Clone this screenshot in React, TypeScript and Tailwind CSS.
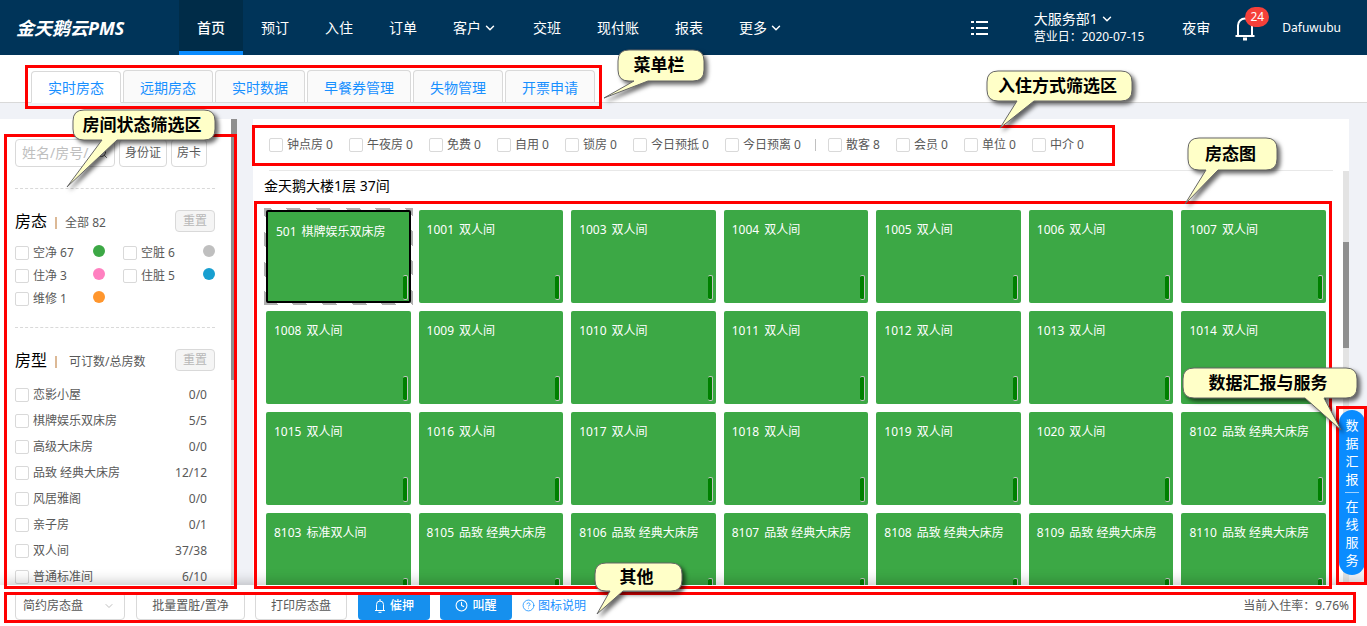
import { ChevronDown, CircleHelp, Clock, Search } from "lucide-react";

// --- DATA ---
const NAV = [
  { label: "首页", active: true },
  { label: "预订" },
  { label: "入住" },
  { label: "订单" },
  { label: "客户", more: true },
  { label: "交班" },
  { label: "现付账" },
  { label: "报表" },
  { label: "更多", more: true },
];

const TABS = ["实时房态", "远期房态", "实时数据", "早餐券管理", "失物管理", "开票申请"];

const STATUSES = [
  { label: "空净 67", dot: "bg-[#3ca845]" },
  { label: "空脏 6", dot: "bg-[#bfbfbf]" },
  { label: "住净 3", dot: "bg-[#ff80c0]" },
  { label: "住脏 5", dot: "bg-[#189fd0]" },
  { label: "维修 1", dot: "bg-[#ff962d]" },
];

const ROOM_TYPES = [
  { name: "恋影小屋", count: "0/0" },
  { name: "棋牌娱乐双床房", count: "5/5" },
  { name: "高级大床房", count: "0/0" },
  { name: "品致 经典大床房", count: "12/12" },
  { name: "风居雅阁", count: "0/0" },
  { name: "亲子房", count: "0/1" },
  { name: "双人间", count: "37/38" },
  { name: "普通标准间", count: "6/10" },
];

const STAY_FILTERS = ["钟点房 0", "午夜房 0", "免费 0", "自用 0", "锁房 0", "今日预抵 0", "今日预离 0"];
const GUEST_FILTERS = ["散客 8", "会员 0", "单位 0", "中介 0"];

const ROOMS = [
  { no: "501", type: "棋牌娱乐双床房" },
  { no: "1001", type: "双人间" },
  { no: "1003", type: "双人间" },
  { no: "1004", type: "双人间" },
  { no: "1005", type: "双人间" },
  { no: "1006", type: "双人间" },
  { no: "1007", type: "双人间" },
  { no: "1008", type: "双人间" },
  { no: "1009", type: "双人间" },
  { no: "1010", type: "双人间" },
  { no: "1011", type: "双人间" },
  { no: "1012", type: "双人间" },
  { no: "1013", type: "双人间" },
  { no: "1014", type: "双人间" },
  { no: "1015", type: "双人间" },
  { no: "1016", type: "双人间" },
  { no: "1017", type: "双人间" },
  { no: "1018", type: "双人间" },
  { no: "1019", type: "双人间" },
  { no: "1020", type: "双人间" },
  { no: "8102", type: "品致 经典大床房" },
  { no: "8103", type: "标准双人间" },
  { no: "8105", type: "品致 经典大床房" },
  { no: "8106", type: "品致 经典大床房" },
  { no: "8107", type: "品致 经典大床房" },
  { no: "8108", type: "品致 经典大床房" },
  { no: "8109", type: "品致 经典大床房" },
  { no: "8110", type: "品致 经典大床房" },
];

export default function App() {
  return (
    <div className="relative flex h-screen flex-col overflow-hidden bg-[#f0f2f7] font-['Noto_Sans','Noto_Sans_CJK_SC',sans-serif] text-xs text-[#595959]">
      <Header />
      <TabStrip />
      <div className="flex min-h-0 flex-1 gap-4 pt-4 pr-[18px]">
        <Sidebar />
        <RoomBoard />
      </div>
      <Footer />
      <SideDock />
      <Guide />
    </div>
  );
}

// --- TOP BAR ---
function Header() {
  return (
    <header className="flex h-[55px] shrink-0 items-center bg-[#003459] pr-[26px] text-sm text-white">
      <h1 className="w-[179px] pl-4 text-lg font-bold italic whitespace-nowrap">金天鹅云PMS</h1>
      <nav className="flex h-full">
        {NAV.map((item) => (
          <a
            key={item.label}
            href="#"
            className={`flex items-center gap-0.5 px-[18px] whitespace-nowrap ${
              item.active ? "bg-[#002c48] font-medium shadow-[inset_0_-4px_0_#0a8cff]" : ""
            }`}
          >
            {item.label}
            {item.more && <ChevronDown size={14} strokeWidth={2.5} />}
          </a>
        ))}
      </nav>
      <div className="ml-auto flex items-center whitespace-nowrap">
        <button aria-label="列表" className="mr-[46px]">
          <svg width="17" height="14" viewBox="0 0 17 14" fill="currentColor">
            <path d="M0 0h3v2H0zM0 6h3v2H0zM0 12h3v2H0zM5 0h12v2H5zM5 6h12v2H5zM5 12h12v2H5z" />
          </svg>
        </button>
        <div className="mr-[38px] leading-[18px]">
          <button className="flex items-center gap-0.5">
            大服务部1 <ChevronDown size={14} strokeWidth={2.5} />
          </button>
          <div className="text-xs leading-[18px]">营业日：2020-07-15</div>
        </div>
        <a href="#" className="mr-[23px]">夜审</a>
        <button aria-label="通知" className="relative mr-[25px]">
          <svg width="24" height="26" viewBox="0 0 24 26" fill="none" stroke="currentColor" strokeWidth="2">
            <path d="M5 21V10.500a7 7 0 0 1 14 0V21" />
            <path d="M2.500 21h19" />
            <path d="M10 24h4" strokeWidth="3" />
          </svg>
          <span className="absolute -top-2 left-3 h-5 w-6 rounded-full bg-[#f5403a] text-center text-xs leading-5">24</span>
        </button>
        <a href="#" className="text-xs">Dafuwubu</a>
      </div>
    </header>
  );
}

function TabStrip() {
  return (
    <div className="flex h-12 shrink-0 items-end gap-0.5 border-b border-[#d9d9d9] bg-white pl-[31px]">
      {TABS.map((tab, i) => (
        <button
          key={tab}
          className={`h-8 rounded-t border border-[#d9d9d9] px-4 pt-0.5 text-sm whitespace-nowrap text-[#1890ff] ${
            i === 0 ? "-mb-px border-b-white bg-white" : "border-b-0 bg-[#fafafa]"
          }`}
        >
          {tab}
        </button>
      ))}
    </div>
  );
}

function Check({ label }: { label: string }) {
  return (
    <label className="flex items-center gap-1 whitespace-nowrap">
      <input type="checkbox" className="size-3.5 appearance-none rounded-xs border border-[#d9d9d9] bg-white" />
      {label}
    </label>
  );
}

function ResetButton() {
  return (
    <button className="ml-auto h-[22px] w-10 rounded border border-[#d9d9d9] bg-[#f5f5f5] text-[#b8b8b8]">重置</button>
  );
}

// --- LEFT FILTERS ---
function Sidebar() {
  return (
    <aside className="flex w-[237px] shrink-0 overflow-hidden bg-white">
      <div className="flex-1 pt-5 pr-4 pl-[15px]">
        <div className="flex gap-1">
          <div className="flex h-7 w-[100px] items-center rounded border border-[#d9d9d9] px-1.5">
            <input
              aria-label="姓名/房号"
              placeholder="姓名/房号/"
              className="w-full min-w-0 text-sm outline-none placeholder:text-[#bfbfbf]"
            />
            <Search size={12} className="shrink-0" />
          </div>
          <button className="h-7 w-12 rounded border border-[#d9d9d9]">身份证</button>
          <button className="h-7 w-9 rounded border border-[#d9d9d9]">房卡</button>
        </div>

        <section className="mt-[21px] w-[200px] border-t border-dashed border-[#d9d9d9] pt-[21px]">
          <div className="flex items-center">
            <h2 className="text-base leading-[22px] text-black">房态</h2>
            <span className="mx-2 mt-1 h-3 w-0.5 bg-[#dcb996]" />
            <span className="pt-1">全部 82</span>
            <ResetButton />
          </div>
          <div className="mt-[9px] grid grid-cols-[84px_92px] gap-x-6">
            {STATUSES.map((s) => (
              <div key={s.label} className="flex h-[23px] items-center justify-between">
                <Check label={s.label} />
                <span className={`-mt-1 size-3 rounded-full ${s.dot} ${s.label.includes("脏") ? "" : "-mr-1.5"}`} />
              </div>
            ))}
          </div>
        </section>

        <section className="mt-[17px] w-[200px] border-t border-dashed border-[#d9d9d9] pt-[21px]">
          <div className="flex items-center">
            <h2 className="text-base leading-[22px] text-black">房型</h2>
            <span className="mt-1 mr-3 ml-2 h-3 w-0.5 bg-[#dcb996]" />
            <span className="pt-1">可订数/总房数</span>
            <ResetButton />
          </div>
          <ul className="mt-[11px]">
            {ROOM_TYPES.map((r) => (
              <li key={r.name} className="flex h-[26px] items-center justify-between pr-2">
                <Check label={r.name} />
                <span>{r.count}</span>
              </li>
            ))}
          </ul>
        </section>
      </div>
      <div className="w-1.5 bg-[#dedede]">
        <div className="h-[261px] bg-[#8f8f8f]" />
      </div>
    </aside>
  );
}

// --- ROOM GRID ---
function RoomBoard() {
  return (
    <main className="flex min-w-0 flex-1 flex-col overflow-hidden bg-white">
      <div className="mr-4 ml-4 flex h-[52px] shrink-0 items-center gap-4 border-b border-[#e8e8e8]">
        {STAY_FILTERS.map((f) => (
          <Check key={f} label={f} />
        ))}
        <div className="-ml-0.5 flex items-center gap-3">
          <span className="h-3 w-px bg-[#c0c0c0]" />
          <Check label={GUEST_FILTERS[0]} />
        </div>
        {GUEST_FILTERS.slice(1).map((f) => (
          <Check key={f} label={f} />
        ))}
      </div>
      <div className="flex min-h-0 flex-1">
        <div className="flex-1 overflow-hidden pr-[17px] pl-[13px]">
          <h2 className="-ml-0.5 pt-1 text-sm leading-[22px] text-black">金天鹅大楼1层 37间</h2>
          <div className="mt-[13px] grid grid-cols-7 gap-2">
            {ROOMS.map((room, i) => (
              <RoomTile key={room.no} no={room.no} type={room.type} selected={i === 0} />
            ))}
          </div>
        </div>
        <div className="w-1.5 bg-[#e3e3e3] pt-[71px]">
          <div className="h-[106px] bg-[#8f8f8f]" />
        </div>
      </div>
    </main>
  );
}

function RoomTile({ no, type, selected }: { no: string; type: string; selected: boolean }) {
  return (
    <div className="relative h-[93px]">
      {selected && (
        <div className="absolute -inset-0.5 bg-[repeating-linear-gradient(45deg,#b0b0b0_0_10px,#fff_10px_21px)]" />
      )}
      <button
        className={`relative flex size-full items-start gap-[5px] overflow-hidden rounded-xs bg-[#3ca845] px-2 pt-2.5 leading-5 whitespace-nowrap text-white ${
          selected ? "border-2 border-black" : ""
        }`}
      >
        <span>{no}</span>
        <span>{type}</span>
        <span
          className={`absolute h-[25px] w-[5px] rounded-xs border border-l-0 border-[#c4c4c4] bg-[#008000] ${
            selected ? "right-px bottom-px" : "right-[3px] bottom-[3px]"
          }`}
        />
      </button>
    </div>
  );
}

// --- BOTTOM BAR ---
function Footer() {
  return (
    <footer className="relative flex h-[41px] shrink-0 items-center bg-white pr-[18px] pb-1.5 pl-[15px] pt-1.5 whitespace-nowrap shadow-[0_-2px_14px_rgba(0,0,0,0.25)]">
      <div className="relative">
        <select aria-label="房态盘" className="h-7 w-[110px] appearance-none rounded border border-[#d9d9d9] bg-white px-[7px]">
          <option>简约房态盘</option>
        </select>
        <ChevronDown size={12} className="absolute top-2 right-2.5 text-[#bfbfbf]" />
      </div>
      <button className="ml-[11px] h-7 w-[109px] rounded border border-[#d9d9d9]">批量置脏/置净</button>
      <button className="ml-2.5 h-7 w-[92px] rounded border border-[#d9d9d9]">打印房态盘</button>
      <button className="ml-[11px] flex h-7 w-[72px] items-center justify-center gap-1 rounded bg-[#1690ee] font-medium text-white">
        <svg width="12" height="14" viewBox="0 0 12 14" fill="none" stroke="currentColor">
          <path d="M2.500 11V5.500a3.500 3.500 0 0 1 7 0V11M1 11.500h10M6 0v2M4.500 13.300h3" />
        </svg>
        催押
      </button>
      <button className="ml-2.5 flex h-7 w-[72px] items-center justify-center gap-1 rounded bg-[#1690ee] font-medium text-white">
        <Clock size={13} /> 叫醒
      </button>
      <a href="#" className="ml-2.5 flex items-center gap-[3px] text-[#1890ff]">
        <CircleHelp size={13} strokeWidth={1.5} /> 图标说明
      </a>
      <span className="ml-auto">当前入住率：9.76%</span>
    </footer>
  );
}

function SideDock() {
  return (
    <div className="absolute top-[410px] right-0.5 flex w-[26px] flex-col items-center rounded-full bg-[#0a8cff] py-1.5 text-[13px] leading-[18px] text-white">
      <button className="w-[13px]">数据汇报</button>
      <span className="my-1 h-px w-3.5 bg-white/60" />
      <button className="w-[13px]">在线服务</button>
    </div>
  );
}

// --- GUIDE LAYER: red frames and speech bubbles above the page ---
function Guide() {
  return (
    <div className="pointer-events-none absolute inset-0">
      <div className="absolute top-[65px] left-[25px] h-11 w-[577px] border-3 border-[#ff0000]" />
      <div className="absolute top-[134px] bottom-[37px] left-1 w-[233px] border-3 border-[#ff0000]" />
      <div className="absolute top-[125px] left-[252px] h-[41px] w-[863px] border-3 border-[#ff0000]" />
      <div className="absolute top-[201px] right-[35px] bottom-[37px] left-[254px] border-3 border-[#ff0000]" />
      <div className="absolute top-[406px] right-0 h-[179px] w-[31px] border-3 border-[#ff0000]" />
      <div className="absolute right-[11px] bottom-[3px] left-1 h-[31px] border-3 border-[#ff0000]" />

      <Callout text="菜单栏" place="top-[50px] left-[618px]" w={86} h={31} base={[16, 30]} tip={[-14, 48]} />
      <Callout text="入住方式筛选区" place="top-[71px] right-[235px]" w={145} h={30} base={[30, 47]} tip={[13, 57]} />
      <Callout text="房间状态筛选区" place="top-[110px] left-[73px]" w={142} h={30} base={[29, 44]} tip={[-6, 77]} />
      <Callout text="房态图" place="top-[138px] right-[90px]" w={89} h={32} base={[18, 30]} tip={[-3, 66]} />
      <Callout text="数据汇报与服务" place="top-[368px] right-[10px]" w={174} h={30} base={[122, 141]} tip={[158, 62]} />
      <Callout text="其他" place="bottom-[35px] left-[595px]" w={87} h={28} base={[15, 28]} tip={[2, 51]} />
    </div>
  );
}

type CalloutProps = {
  text: string;
  place: string;
  w: number;
  h: number;
  base: [number, number];
  tip: [number, number];
};

function Callout({ text, place, w, h, base, tip }: CalloutProps) {
  const r = 11;
  const outline = [
    `M${r} 0H${w - r}Q${w} 0 ${w} ${r}V${h - r}Q${w} ${h} ${w - r} ${h}`,
    `H${base[1]}L${tip[0]} ${tip[1]}L${base[0]} ${h}`,
    `H${r}Q0 ${h} 0 ${h - r}V${r}Q0 0 ${r} 0Z`,
  ].join("");

  return (
    <div className={`absolute ${place}`}>
      <svg width={w} height={h} className="block overflow-visible drop-shadow-[3px_3px_2px_rgba(0,0,0,0.6)]">
        <path d={outline} fill="#ffffc8" stroke="#666666" />
      </svg>
      <span className="absolute inset-0 flex items-center justify-center pr-1 text-[17px] font-bold whitespace-nowrap text-black">
        {text}
      </span>
    </div>
  );
}
